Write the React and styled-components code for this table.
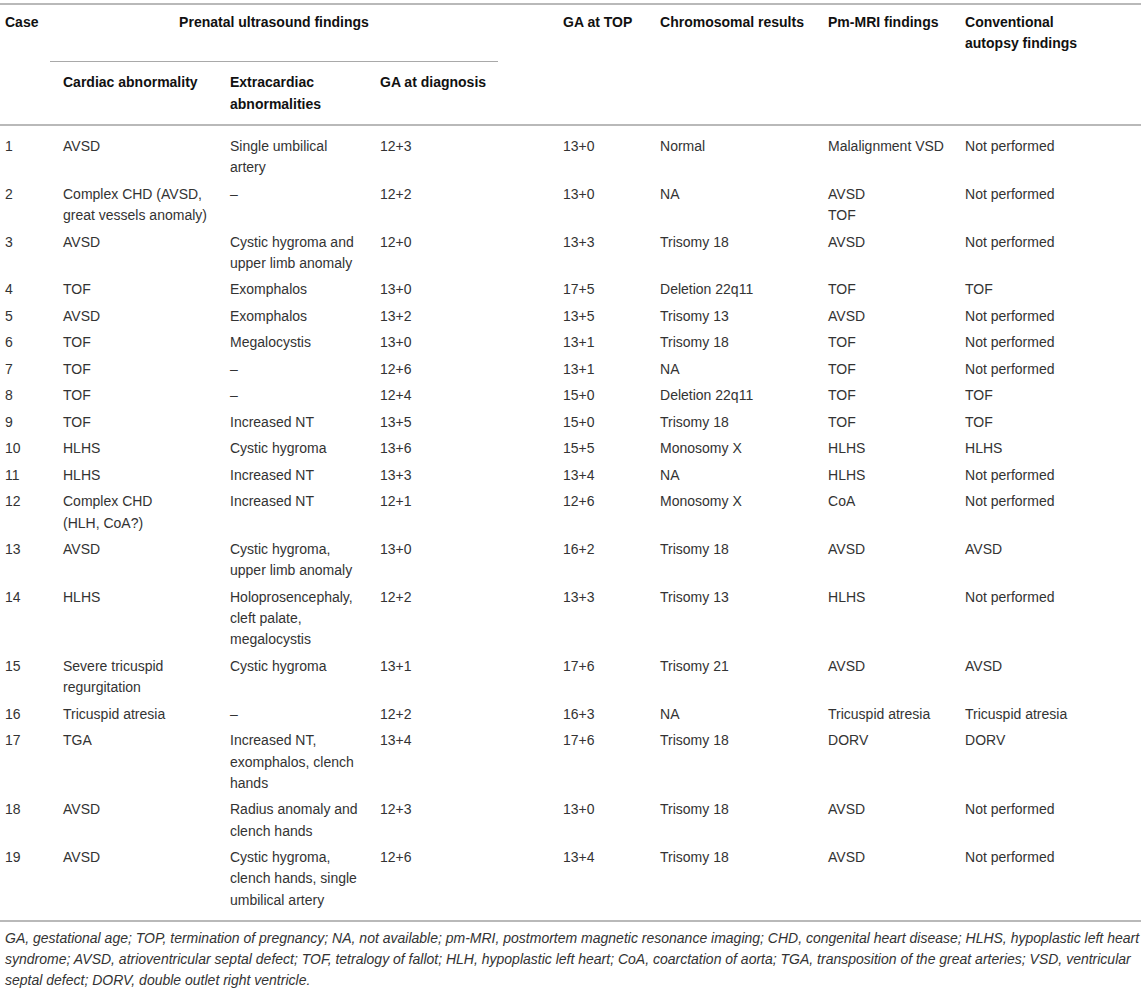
import React from "react";
import styled, { createGlobalStyle } from "styled-components";

const GlobalStyle = createGlobalStyle`
  html, body {
    margin: 0;
    padding: 0;
    background: #fff;
  }
  body {
    font-family: "Liberation Sans", Arial, sans-serif;
    font-size: 14px;
    color: #333;
  }
`;

const Page = styled.div`
  padding-top: 3px;
  width: 1145px;
`;

const Table = styled.table`
  width: 1141px;
  table-layout: fixed;
  border-collapse: collapse;
  border-top: 2px solid #b9b9b9;
  border-bottom: 2px solid #b9b9b9;
`;

const Head = styled.thead`
  border-bottom: 2px solid #b9b9b9;
`;

const Th = styled.th`
  text-align: left;
  vertical-align: top;
  font-weight: bold;
  color: #111;
  line-height: 21.3px;
  padding: ${(p) => (p.$sub ? "10px 12px 9px 5px" : "7px 12px 0 5px")};
`;

const GroupTh = styled.th`
  padding: 7px 0 0 0;
  vertical-align: top;
`;

const GroupLabel = styled.div`
  width: 448px;
  margin-left: -8px;
  text-align: center;
  font-weight: bold;
  color: #111;
  line-height: 21.3px;
  padding-bottom: 28px;
  border-bottom: 1px solid #a9a9a9;
`;

const Row = styled.tr`
  &:first-child td {
    padding-top: 10.2px;
  }
  &:last-child td {
    padding-bottom: 9px;
  }
`;

const Td = styled.td`
  vertical-align: top;
  line-height: 21.3px;
  padding: 2.6px 12px 2.6px 5px;
  color: #333;
`;

const Note = styled.p`
  margin: 0;
  padding: 6px 0 0 5px;
  font-style: italic;
  line-height: 21px;
  color: #333;
`;

const widths = [58, 167, 150, 183, 97, 168, 137, 181];

const rows = [
  ["1", "AVSD", "Single umbilical artery", "12+3", "13+0", "Normal", "Malalignment VSD", "Not performed"],
  ["2", "Complex CHD (AVSD, great vessels anomaly)", "–", "12+2", "13+0", "NA", ["AVSD", "TOF"], "Not performed"],
  ["3", "AVSD", "Cystic hygroma and upper limb anomaly", "12+0", "13+3", "Trisomy 18", "AVSD", "Not performed"],
  ["4", "TOF", "Exomphalos", "13+0", "17+5", "Deletion 22q11", "TOF", "TOF"],
  ["5", "AVSD", "Exomphalos", "13+2", "13+5", "Trisomy 13", "AVSD", "Not performed"],
  ["6", "TOF", "Megalocystis", "13+0", "13+1", "Trisomy 18", "TOF", "Not performed"],
  ["7", "TOF", "–", "12+6", "13+1", "NA", "TOF", "Not performed"],
  ["8", "TOF", "–", "12+4", "15+0", "Deletion 22q11", "TOF", "TOF"],
  ["9", "TOF", "Increased NT", "13+5", "15+0", "Trisomy 18", "TOF", "TOF"],
  ["10", "HLHS", "Cystic hygroma", "13+6", "15+5", "Monosomy X", "HLHS", "HLHS"],
  ["11", "HLHS", "Increased NT", "13+3", "13+4", "NA", "HLHS", "Not performed"],
  ["12", ["Complex CHD", "(HLH, CoA?)"], "Increased NT", "12+1", "12+6", "Monosomy X", "CoA", "Not performed"],
  ["13", "AVSD", "Cystic hygroma, upper limb anomaly", "13+0", "16+2", "Trisomy 18", "AVSD", "AVSD"],
  ["14", "HLHS", "Holoprosencephaly, cleft palate, megalocystis", "12+2", "13+3", "Trisomy 13", "HLHS", "Not performed"],
  ["15", "Severe tricuspid regurgitation", "Cystic hygroma", "13+1", "17+6", "Trisomy 21", "AVSD", "AVSD"],
  ["16", "Tricuspid atresia", "–", "12+2", "16+3", "NA", "Tricuspid atresia", "Tricuspid atresia"],
  ["17", "TGA", "Increased NT, exomphalos, clench hands", "13+4", "17+6", "Trisomy 18", "DORV", "DORV"],
  ["18", "AVSD", "Radius anomaly and clench hands", "12+3", "13+0", "Trisomy 18", "AVSD", "Not performed"],
  ["19", "AVSD", "Cystic hygroma, clench hands, single umbilical artery", "12+6", "13+4", "Trisomy 18", "AVSD", "Not performed"],
];

// cells given as arrays keep their line breaks from the source
function Cell({ value }) {
  if (Array.isArray(value)) {
    return (
      <Td>
        {value.map((line, i) => (
          <React.Fragment key={i}>
            {i > 0 && <br />}
            {line}
          </React.Fragment>
        ))}
      </Td>
    );
  }
  return <Td>{value}</Td>;
}

export default function App() {
  return (
    <Page>
      <GlobalStyle />
      <Table>
        <colgroup>
          {widths.map((w, i) => (
            <col key={i} style={{ width: w }} />
          ))}
        </colgroup>
        <Head>
          <tr>
            <Th rowSpan={2}>Case</Th>
            <GroupTh colSpan={3}>
              <GroupLabel>Prenatal ultrasound findings</GroupLabel>
            </GroupTh>
            <Th rowSpan={2}>GA at TOP</Th>
            <Th rowSpan={2}>Chromosomal results</Th>
            <Th rowSpan={2}>Pm-MRI findings</Th>
            <Th rowSpan={2}>
              Conventional
              <br />
              autopsy findings
            </Th>
          </tr>
          <tr>
            <Th $sub>Cardiac abnormality</Th>
            <Th $sub>Extracardiac abnormalities</Th>
            <Th $sub>GA at diagnosis</Th>
          </tr>
        </Head>
        <tbody>
          {rows.map((r) => (
            <Row key={r[0]}>
              {r.map((v, i) => (
                <Cell key={i} value={v} />
              ))}
            </Row>
          ))}
        </tbody>
      </Table>
      <Note>
        GA, gestational age; TOP, termination of pregnancy; NA, not available; pm-MRI, postmortem magnetic resonance
        imaging; CHD, congenital heart disease; HLHS, hypoplastic left heart syndrome; AVSD, atrioventricular septal
        defect; TOF, tetralogy of fallot; HLH, hypoplastic left heart; CoA, coarctation of aorta; TGA, transposition of
        the great arteries; VSD, ventricular septal defect; DORV, double outlet right ventricle.
      </Note>
    </Page>
  );
}
